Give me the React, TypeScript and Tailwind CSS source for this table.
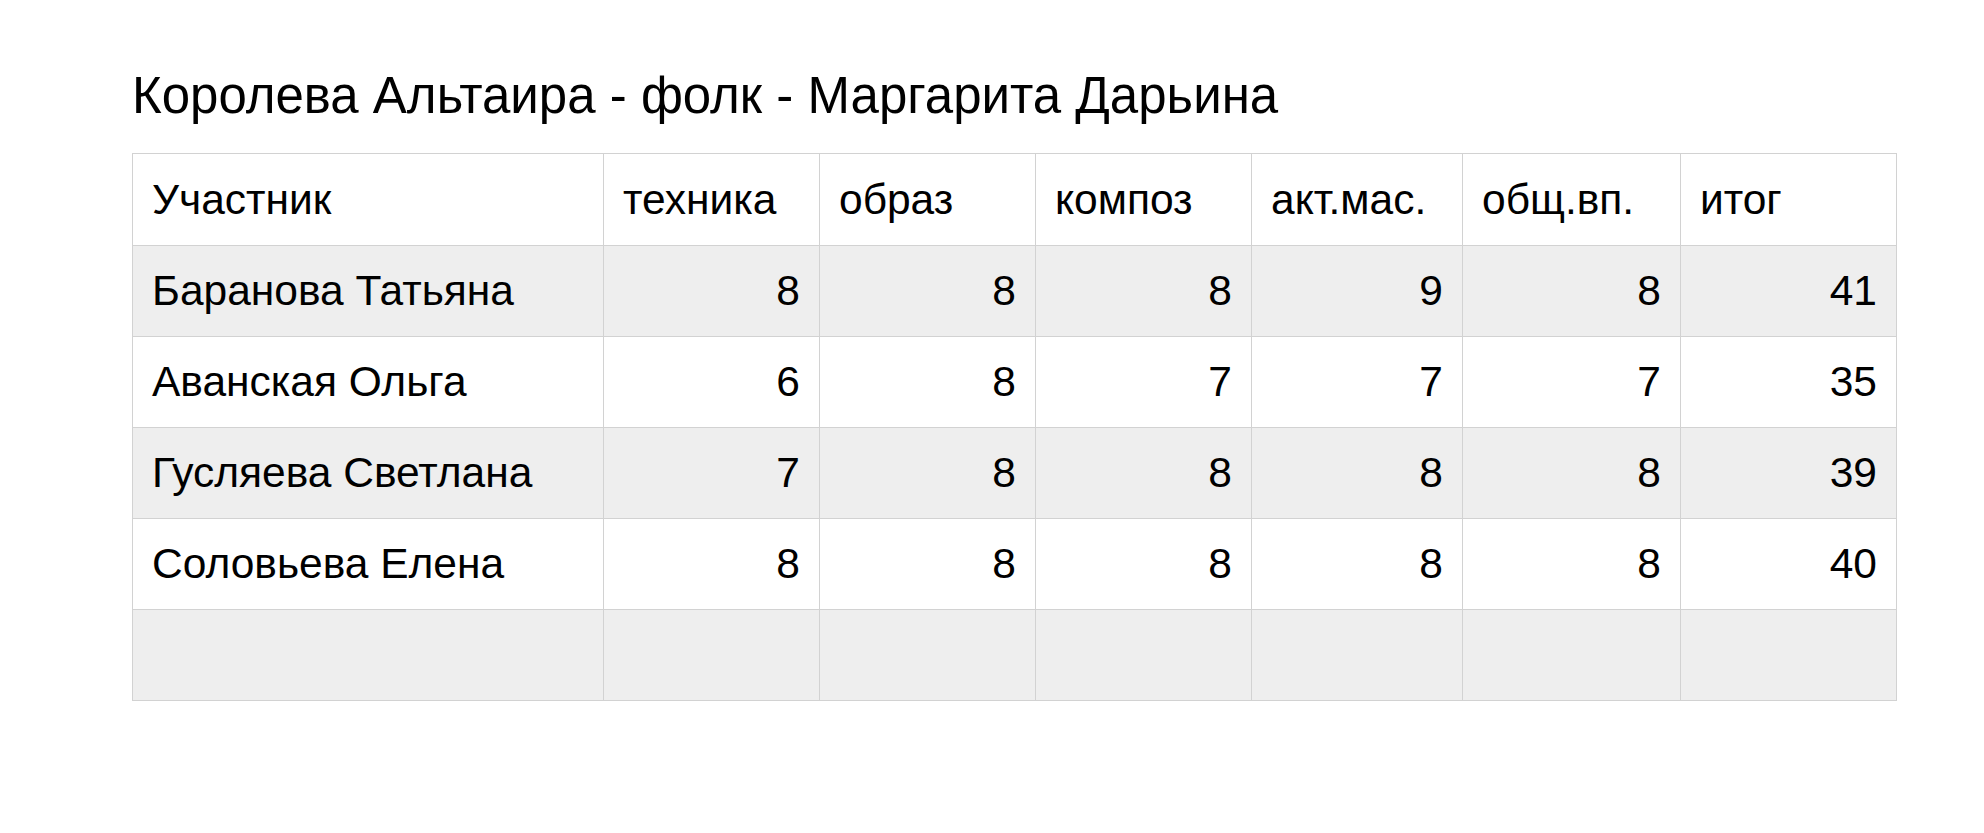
const headers = ["техника", "образ", "композ", "акт.мас.", "общ.вп.", "итог"];

const rows: { name: string; scores: (number | "")[] }[] = [
  { name: "Баранова Татьяна", scores: [8, 8, 8, 9, 8, 41] },
  { name: "Аванская Ольга", scores: [6, 8, 7, 7, 7, 35] },
  { name: "Гусляева Светлана", scores: [7, 8, 8, 8, 8, 39] },
  { name: "Соловьева Елена", scores: [8, 8, 8, 8, 8, 40] },
  { name: "", scores: ["", "", "", "", "", ""] },
];

const colWidths = ["w-[471px]", "w-[216px]", "w-[216px]", "w-[216px]", "w-[211px]", "w-[218px]", "w-[216px]"];

export default function App() {
  return (
    <div className="min-h-screen bg-white pl-[132px] pt-[66px] text-black" style={{ fontFamily: '"Liberation Sans", Arial, sans-serif' }}>
      <h1 className="text-[51px] leading-[60px] font-normal">Королева Альтаира - фолк - Маргарита Дарьина</h1>

      <table className="mt-[27px] border-collapse table-fixed text-[42.5px]">
        <colgroup>
          {colWidths.map((w, i) => (
            <col key={i} className={w} />
          ))}
        </colgroup>
        <thead>
          <tr className="h-[92px] bg-white">
            <th className="border-[1.5px] border-[#d2d2d2] px-[19px] text-left font-normal">Участник</th>
            {headers.map((h) => (
              <th key={h} className="border-[1.5px] border-[#d2d2d2] px-[19px] text-left font-normal">
                {h}
              </th>
            ))}
          </tr>
        </thead>
        <tbody>
          {rows.map((r, i) => (
            <tr key={i} className={`h-[91px] ${i % 2 === 0 ? "bg-[#eeeeee]" : "bg-white"}`}>
              <td className="border-[1.5px] border-[#d2d2d2] px-[19px] text-left">{r.name}</td>
              {r.scores.map((s, j) => (
                <td key={j} className="border-[1.5px] border-[#d2d2d2] px-[19px] text-right">
                  {s}
                </td>
              ))}
            </tr>
          ))}
        </tbody>
      </table>
    </div>
  );
}
